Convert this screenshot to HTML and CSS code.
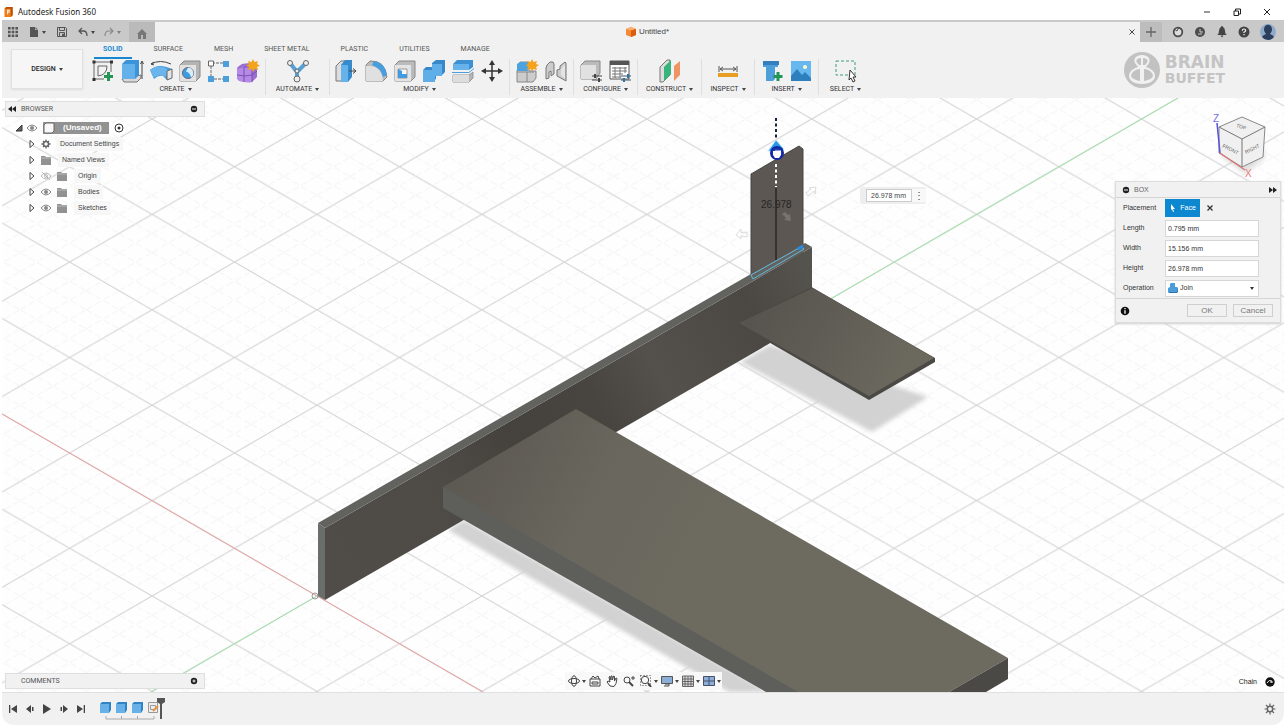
FILE: index.html
```html
<!DOCTYPE html>
<html lang="en">
<head>
<meta charset="utf-8">
<title>Autodesk Fusion 360</title>
<link rel="stylesheet" href="styles.css">
</head>
<body>
<div class="app">
<header class="titlebar">
  <svg class="i10" viewBox="0 0 10 11"><path d="M2 0h7v9l-2 2H0V2z" fill="#ef7d16"/><path d="M2 0h7v9l-2 2V2H0z" fill="#b94c08"/><path d="M3 3h3v1H4v1h2v1H4v2H3z" fill="#fff"/></svg>
  <h1>Autodesk Fusion 360</h1>
  <div class="window-buttons">
    <button aria-label="Minimize"><svg class="i10" viewBox="0 0 10 10"><path d="M2 5h6" stroke="#333"/></svg></button>
    <button aria-label="Restore"><svg class="i10" viewBox="0 0 10 10" fill="none" stroke="#222"><path d="M2 4h4.500v4.500H2zM3.500 4V2h5v5h-2"/></svg></button>
    <button aria-label="Close window"><svg class="i10" viewBox="0 0 10 10"><path d="M2 2l6 6M8 2l-6 6" stroke="#222"/></svg></button>
  </div>
</header>

<div class="docbar">
  <div class="quick">
    <button aria-label="Data panel"><svg class="i10" viewBox="0 0 10 10" fill="#555"><path d="M0 0h2.600v2.600H0zM3.700 0h2.600v2.600H3.700zM7.400 0H10v2.600H7.400zM0 3.700h2.600v2.600H0zM3.700 3.700h2.600v2.600H3.700zM7.400 3.700H10v2.600H7.400zM0 7.400h2.600V10H0zM3.700 7.400h2.600V10H3.700zM7.400 7.400H10V10H7.400z"/></svg></button>
    <button class="drop" aria-label="File"><svg class="i10" viewBox="0 0 10 10"><path d="M1 0h5v3h3v7H1z" fill="#555"/><path d="M6.500 0L9 2.500H6.500z" fill="#666"/></svg></button>
    <button aria-label="Save"><svg class="i10" viewBox="0 0 10 10"><path d="M.5.500h8l1 1v8h-9zM2.500.500v3h5v-3M2.500 9.500v-4h5v4M5.500 7h1v2h-1z" fill="none" stroke="#555"/></svg></button>
    <button class="drop" aria-label="Undo"><svg class="i10" viewBox="0 0 10 10" fill="none" stroke="#555" stroke-width="1.300"><path d="M4 1L1 4l3 3M1 4h4.500Q9 4 9 9"/></svg></button>
    <button class="drop faded" aria-label="Redo"><svg class="i10" viewBox="0 0 10 10" fill="none" stroke="#555" stroke-width="1.200"><path d="M6 1l3 3-3 3M9 4H4.500Q1 4 1 9"/></svg></button>
    <button class="home" aria-label="Home"><svg class="i10" viewBox="0 0 10 10"><path d="M5 0l5 5H9v5H6V6H4v4H1V5H0z" fill="#777"/></svg></button>
  </div>
  <div class="doc-tab">
    <svg class="i10" viewBox="0 0 10 10"><path d="M0 2l5-2 5 2v6l-5 2-5-2z" fill="#f58a35"/><path d="M0 2l5 1.500L10 2 5 0z" fill="#ffb070"/><path d="M5 3.500L10 2v6l-5 2z" fill="#dd5b10"/></svg>
    <span>Untitled*</span>
    <button class="tab-close" aria-label="Close Untitled"><svg class="i8" viewBox="0 0 8 8"><path d="M1.500 1.500l5 5M6.500 1.500l-5 5" stroke="#444"/></svg></button>
  </div>
  <div class="account">
    <button class="plus" aria-label="New tab"><svg class="i10" viewBox="0 0 10 10"><path d="M5 0v10M0 5h10" stroke="#666" stroke-width="1.300"/></svg></button>
    <button aria-label="Extensions"><svg class="i12" viewBox="0 0 12 12"><circle cx="6" cy="6" r="4.300" fill="#ddd" stroke="#4c4c4c" stroke-width="1.800"/><path d="M2 3l3 2 2-4 2 3" fill="none" stroke="#4c4c4c"/></svg></button>
    <button aria-label="Job status"><svg class="i12" viewBox="0 0 12 12"><circle cx="6" cy="6" r="5" fill="#4c4c4c"/><path d="M6 3v3h3M4 8h4" stroke="#ccc" fill="none"/></svg></button>
    <button aria-label="Notifications"><svg class="i12" viewBox="0 0 12 12" fill="#444"><path d="M6 0q1 0 1 1 2 1 2 4 0 3 2 4H1q2-1 2-4 0-3 2-4 0-1 1-1zM4.500 9.500h3L6 11.500z"/></svg></button>
    <button aria-label="Help"><svg class="i12" viewBox="0 0 12 12"><circle cx="6" cy="6" r="5.500" fill="#444"/><path d="M4.300 4.800Q4.300 3 6 3t1.700 1.600Q7.700 5.500 6 6.200V7M6 8v1.300" fill="none" stroke="#eee" stroke-width="1.200"/></svg></button>
    <button aria-label="Account"><svg class="i16" viewBox="0 0 16 16"><circle cx="8" cy="8" r="8" fill="#8fabc9"/><ellipse cx="8" cy="5.500" rx="4" ry="4.800" fill="#2b3f5c"/><path d="M6 8h4v2q3 1 4 3-2.500 3-6 3t-6-3q1-2 4-3z" fill="#2b3f5c"/></svg></button>
  </div>
</div>

<div class="ribbon">
  <button class="workspace drop">DESIGN</button>
  <div class="ribbon-main">
    <nav class="tabs">
      <a class="on" href="#solid">SOLID</a><a href="#surface">SURFACE</a><a href="#mesh">MESH</a><a href="#sheet">SHEET METAL</a><a href="#plastic">PLASTIC</a><a href="#utilities">UTILITIES</a><a href="#manage">MANAGE</a>
    </nav>
    <div class="groups">
      <section class="group">
        <div class="icons">
          <button aria-label="Create sketch"><svg viewBox="0 0 24 24"><path d="M3 3h17M3 3v17h10M20 3v10" fill="none" stroke="#666"/><path d="M1.500 1.500h3v3h-3zM19 1.500h3v3h-3zM1.500 19h3v3h-3z" fill="#333"/><path d="M7 17V7h9q0 9-9 10z" fill="none" stroke="#666"/><path d="M17.500 13v9M13 17.500h9" stroke="#239655" stroke-width="3"/></svg></button>
          <button aria-label="Extrude"><svg viewBox="0 0 24 24"><path d="M2 20l2 3h13l4-4v-3z" fill="#d8d8d8" stroke="#777"/><path d="M2 5l4-4h13v15l-4 4H2z" fill="#3b94d9"/><path d="M2 5h13v15H2z" fill="#63b0ea"/><path d="M22 20V3M20.500 5L22 2l1.500 3" fill="none" stroke="#444"/></svg></button>
          <button aria-label="Revolve"><svg viewBox="0 0 24 24"><path d="M1 11q5-4 10-4t12 3v9l-5 2-4-4q-5-1-9 3z" fill="#3f99dc"/><path d="M1 11q6-5 11-3 6 0 7 4l-2 6q-8-4-12 1z" fill="#6bb5ec"/><path d="M18 12l5-2v9l-5 2z" fill="#e5e5e5" stroke="#666"/><path d="M2 5q9-5 20 0M2 5l3-2M2 5l3 1" fill="none" stroke="#444"/></svg></button>
          <button aria-label="Hole"><svg viewBox="0 0 24 24"><path d="M2 6l4-4h16v16l-4 4H2z" fill="#b4b4b4" stroke="#888"/><path d="M2 6h16v16H2z" fill="#e2e2e2"/><circle cx="10" cy="14" r="5.500" fill="#3d9be0" stroke="#667"/><path d="M10 8.500a5.500 5.500 0 0 1 3 10q-1-5-5-6z" fill="#d9ecfa"/></svg></button>
          <button aria-label="Pattern"><svg viewBox="0 0 24 24"><path d="M5 4h12M4 7v12M7 20h10" stroke="#666" stroke-dasharray="3 1"/><path d="M1.500 2h5v5h-5z" fill="#fff" stroke="#666"/><path d="M16 2h6v6h-6zM1 17h6v6H1zM16 17h6v6h-6z" fill="#4b9fdc"/></svg></button>
          <button aria-label="Create form"><svg viewBox="0 0 24 24"><path d="M1 10q0-2 2-3l3-2q8-2 15 1v12l-5 5q-6 1-12-1-3-1-3-4z" fill="#9a6ed3"/><path d="M1 10q7-3 15 0v13q-6 1-12-1-3-1-3-4z" fill="#b48ae6"/><path d="M8 9v14M1 16q8 2 15 0l5-4M16 10v13M8 9l5-4M16 10l5-4" fill="none" stroke="#7950b4"/><path d="M17 0l1.500 3L22 2l-1 3 3 1.500-3 1.500 1 3-3.500-1L17 13l-1.500-3-3.500 1 1-3-3-1.500L13 5l-1-3 3.500 1z" fill="#f3a31d"/></svg></button>
        </div>
        <button class="label drop">CREATE</button>
      </section>
      <section class="group">
        <div class="icons"><button aria-label="Automate"><svg viewBox="0 0 24 24"><path d="M4 4l7 9 9-9M11 13v6" fill="none" stroke="#579fd5" stroke-width="4"/><g fill="#eee" stroke="#666"><circle cx="4" cy="4" r="2.500"/><circle cx="20" cy="4" r="2.500"/><circle cx="11" cy="20" r="3"/><circle cx="11" cy="12" r="2"/></g></svg></button></div>
        <button class="label drop">AUTOMATE</button>
      </section>
      <section class="group">
        <div class="icons">
          <button aria-label="Press pull"><svg viewBox="0 0 24 24"><path d="M1 7l5-5h4v20H1z" fill="#ddd" stroke="#777"/><path d="M6 6l4-5h7v17l-4 5H6z" fill="#358bce"/><path d="M6 6h7v17H6z" fill="#66b2eb"/><path d="M14 12h7M18 9.500l3 2.500-3 2.500" fill="none" stroke="#444"/></svg></button>
          <button aria-label="Fillet"><svg viewBox="0 0 24 24"><path d="M2 6l4-4q15-1 17 16l-4 4H2z" fill="#bbb" stroke="#888"/><path d="M2 7h4q12 1 13 15H2z" fill="#e0e0e0"/><path d="M10 2q11 2 13 14l-4 2Q17 9 8 6z" fill="#469edf"/></svg></button>
          <button aria-label="Shell"><svg viewBox="0 0 24 24"><path d="M2 6l4-4h16v16l-4 4H2z" fill="#bbb" stroke="#888"/><path d="M2 6h16v16H2z" fill="#e4e4e4"/><path d="M5 10h9v9H5z" fill="#f7f7f7" stroke="#999"/><path d="M5 10l4 2v3h5v4H5z" fill="#429be0"/></svg></button>
          <button aria-label="Combine"><svg viewBox="0 0 24 24"><path d="M1 11l3-3h6V4l4-3h9v12l-4 4h-5v3l-4 3H1z" fill="#3788cb"/><path d="M1 11h9V5h10v12h-7v6H1z" fill="#5faee8"/></svg></button>
          <button aria-label="Split"><svg viewBox="0 0 24 24"><path d="M2 5l4-4h16v7l-4 3H2z" fill="#3d91d3"/><path d="M2 5h16v6H2z" fill="#68b2eb"/><path d="M2 16h16l4-3v6l-4 4H2z" fill="#b5b5b5" stroke="#999"/><path d="M2 16h16v7H2z" fill="#ddd"/><path d="M1 13.500h17l5-4" fill="none" stroke="#4a9fde"/></svg></button>
          <button aria-label="Move"><svg viewBox="0 0 24 24"><path d="M12 4v16M4 12h16" stroke="#333" stroke-width="1.500"/><path d="M12 1l3 5H9zM12 23l-3-5h6zM1 12l5-3v6zM23 12l-5 3V9z" fill="#333"/></svg></button>
        </div>
        <button class="label drop">MODIFY</button>
      </section>
      <section class="group">
        <div class="icons">
          <button aria-label="New component"><svg viewBox="0 0 24 24"><path d="M2 12l3-9h9v9h7v7l-3 4H2z" fill="#ccc" stroke="#888"/><path d="M2 5l3-2h8v9H2z" fill="#4da3e0"/><path d="M2 13h10v10M12 13h7" fill="none" stroke="#888"/><path d="M17 0l1.500 3L22 2l-1 3 3 1-3 2 1 3-3.500-1L17 12l-1.500-2-3.500 1 1-3-2-2 2-1-1-3 3.500 1z" fill="#f3a31d"/></svg></button>
          <button aria-label="Joint"><svg viewBox="0 0 24 24" fill="#ccc" stroke="#777"><path d="M2 20V9q0-3 4-6 4-1 4 2v10l-3 2v-5l-2 1v6zM22 22l-7-4-2-1v-6l3-1V7l5-4 1 1z"/><path d="M17 10v6l4 4V5z" fill="#e4e4e4" stroke="none"/></svg></button>
        </div>
        <button class="label drop">ASSEMBLE</button>
      </section>
      <section class="group">
        <div class="icons">
          <button aria-label="Configure model"><svg viewBox="0 0 24 24"><path d="M2 6l4-4h15v12l-4 6H2z" fill="#bbb" stroke="#888"/><path d="M2 6h15v14H2z" fill="#e1e1e1"/><path d="M13 17h10M13 21h10" stroke="#444"/><path d="M16 15v4M20 19v4" stroke="#444" stroke-width="2"/></svg></button>
          <button aria-label="Configuration table"><svg viewBox="0 0 24 24"><path d="M2 2h19v18H2z" fill="#fff" stroke="#555"/><path d="M2 2h19v4H2z" fill="#555"/><path d="M4 9h15M4 12h15M4 15h11M4 18h9M7 8v11M12 8v11M17 8v6" stroke="#777"/><path d="M13 17h10M13 21h10" stroke="#456"/><path d="M20 15v4M16 19v4" stroke="#2d75a6" stroke-width="2"/></svg></button>
        </div>
        <button class="label drop">CONFIGURE</button>
      </section>
      <section class="group">
        <div class="icons"><button aria-label="Offset plane"><svg viewBox="0 0 24 24"><path d="M2 8l7-7h3v15l-7 7H2z" fill="#ddd" stroke="#777"/><path d="M6 8l7-7v14l-7 7z" fill="#36b47c"/><path d="M16 7l6-5v14l-6 6z" fill="#ef9565"/></svg></button></div>
        <button class="label drop">CONSTRUCT</button>
      </section>
      <section class="group narrow">
        <div class="icons"><button aria-label="Measure"><svg viewBox="0 0 24 24"><path d="M3 7v6M21 7v6M4 10h16M7 8l-3 2 3 2M17 8l3 2-3 2" fill="none" stroke="#555"/><path d="M2 14h20v4H2z" fill="#e89d25"/></svg></button></div>
        <button class="label drop">INSPECT</button>
      </section>
      <section class="group">
        <div class="icons">
          <button aria-label="Insert component"><svg viewBox="0 0 24 24"><path d="M3 2h15v6h-3v12l-2 2H6V8H3z" fill="#4f9edc"/><path d="M3 2h16v4H3z" fill="#347fbc"/><path d="M18 13v9M13.500 17.500h9" stroke="#239655" stroke-width="3"/></svg></button>
          <button aria-label="Insert image"><svg viewBox="0 0 24 24"><path d="M2 2h20v20H2z" fill="#67b8ef"/><path d="M2 17l6-7 5 6 3-3 6 6v3H2z" fill="#2d7fbe"/><circle cx="16" cy="8" r="2" fill="#fff8cd"/></svg></button>
        </div>
        <button class="label drop">INSERT</button>
      </section>
      <section class="group narrow last">
        <div class="icons"><button aria-label="Select"><svg viewBox="0 0 24 24"><path d="M2 2h19v14H2z" fill="none" stroke="#3e9c78" stroke-dasharray="3 2"/><path d="M16 11l6 7h-3l2 4-2 1-2-4-2 2z" fill="#fff" stroke="#333"/></svg></button></div>
        <button class="label drop">SELECT</button>
      </section>
    </div>
  </div>
  <div class="brand">
    <svg viewBox="0 0 36 36"><circle cx="18" cy="18" r="18" fill="#c2c2c2"/><path d="M18 3c-6 0-9 4-7 8l3 4c-6 2-9 5-9 9 0 5 6 8 13 8s13-3 13-8c0-4-3-7-9-9l3-4c2-4-1-8-7-8z" fill="#f1f1f1"/><g fill="#c2c2c2"><path d="M17 6v7h-2Q9 7 17 6zM19 6v7h2Q27 7 19 6zM16 17v12Q2 26 10 19q3-2 6-2zM20 17v12q14-3 6-10-3-2-6-2z"/></g></svg>
    <div class="brand-name"><span class="brain">BRAIN</span><span class="buffet">BUFFET</span></div>
  </div>
</div>

<main class="canvas">
  <svg class="scene" viewBox="2 98 1282 594" preserveAspectRatio="xMinYMin slice">
    <defs>
      <pattern id="mid" x="317" y="596" width="32.980" height="19.080" patternUnits="userSpaceOnUse"><path d="M0 0l32.980 19.080M0 19.080L32.980 0" stroke="#efeff0" stroke-width=".8" stroke-dasharray="7 3"/></pattern>
      <pattern id="major" x="317" y="596" width="164.900" height="95.400" patternUnits="userSpaceOnUse"><path d="M0 0l164.900 95.400M0 95.400L164.900 0" stroke="#d0d0d1"/></pattern>
      <linearGradient id="spar" x1="325" y1="560" x2="812" y2="280" gradientUnits="userSpaceOnUse"><stop offset="0" stop-color="#504d49"/><stop offset=".25" stop-color="#4e4b46"/><stop offset=".4" stop-color="#45413c"/><stop offset=".56" stop-color="#48443f"/><stop offset=".68" stop-color="#54504b"/><stop offset=".88" stop-color="#4b4844"/><stop offset="1" stop-color="#55534e"/></linearGradient>
      <linearGradient id="wing" x1="444" y1="487" x2="680" y2="610" gradientUnits="userSpaceOnUse"><stop offset="0" stop-color="#5c5852"/><stop offset=".5" stop-color="#69665d"/><stop offset="1" stop-color="#6d6a60"/></linearGradient>
      <linearGradient id="tail" x1="760" y1="300" x2="900" y2="375" gradientUnits="userSpaceOnUse"><stop offset="0" stop-color="#57534e"/><stop offset="1" stop-color="#6b685e"/></linearGradient>
      <filter id="soft"><feGaussianBlur stdDeviation="2"/></filter>
    </defs>
    <path d="M2 98h1282v594H2z" fill="#fefefe"/>
    <path d="M2 98h1282v594H2z" fill="url(#mid)"/>
    <path d="M2 98h1282v594H2z" fill="url(#major)"/>
    <path d="M2 414l315 182 166 96" stroke="#e8a0a0" fill="none"/>
    <path d="M151 692L1178 98" stroke="#9fe3a6"/>
    <path d="M464 520l-16 10 281 162h40zM770 345l-30 17 132 70 56-35z" fill="#d2d2d2" filter="url(#soft)"/>
    <path d="M751 174l48-28 4 3v105l-52 24z" fill="#5c5753"/>
    <path d="M751 174l48-28 4 3v98M751 174v103" fill="none" stroke="#474743"/>
    <path d="M325 528l487-281v72L325 600z" fill="url(#spar)"/>
    <path d="M318 523l487-280 7 4-487 281z" fill="#62625f"/>
    <path d="M318 523l7 5v72l-7-4z" fill="#6b6d6a"/>
    <path d="M812 287l1 1 122 70v4l-66 38-130-75v-3z" fill="#4a4945"/>
    <path d="M813 288l121 70-65 38-130-73z" fill="url(#tail)"/>
    <path d="M443 487l20-5 345 210h-42L443 508z" fill="#5e5f5b"/>
    <path d="M443 487l133-78 432 249-59 34H798z" fill="url(#wing)"/>
    <path d="M1008 658v21l-22 13h-37z" fill="#4b4946"/>
    <path d="M751 275l50-28 3 2-51 30z" fill="none" stroke="#63b8dd"/>
    <path d="M798 249l5-3" stroke="#238ce8" stroke-width="3"/>
    <text x="761" y="208" class="dimension">26.978</text>
    <path d="M776 118v24" stroke="#162039" stroke-width="2" stroke-dasharray="3 2.500"/>
    <path d="M776 164v24" stroke="#fff" stroke-width="2" stroke-dasharray="3 2.500"/>
    <path d="M776 187v73" stroke="#292520" stroke-width="1.500"/>
    <path d="M768 151l8-11 8 9-4 3z" fill="#2798e6" stroke="#cbefff"/>
    <circle cx="777" cy="153" r="6" fill="#183cae" stroke="#1427a1" stroke-width="2"/>
    <path d="M773 151v4l2 3h4l2-3v-4l-1-1-1 1-1-1-1 1-1-1-1 1z" fill="#fff"/>
    <g fill="none" stroke="#dcdcdc"><path d="M806 193l5-4-2-1 7-1-1 7-1-3-6 5zM736 235l5-6v4l6-1v5l-6-1v3z"/></g>
    <path d="M782 214l3-2 3 3 2-1 1 7-7-1 2-2z" fill="#77736e"/>
    <circle cx="315" cy="596" r="3" fill="none" stroke="#999"/>
    <g class="viewcube">
      <path d="M1219 155l26 19 20-16-1-10z" fill="#999" opacity=".3" filter="url(#soft)"/>
      <path d="M1219 127l23-10 23 10-2 30-21 10-23-14z" fill="#f0f0f0" stroke="#888"/>
      <path d="M1219 127l23 12 23-12M1242 139v28" fill="none" stroke="#777"/>
      <path d="M1217 123l3 30" stroke="#5552db" stroke-width="1.500"/><path d="M1220 153l25 17" stroke="#dc777a" stroke-width="1.500"/>
      <text x="1213" y="122" fill="#7770e5" class="axis">Z</text><text x="1245" y="177" fill="#ed7777" class="axis">X</text>
      <text transform="translate(1222 147) rotate(26)">FRONT</text><text transform="translate(1246 154) rotate(-27)">RIGHT</text><text transform="translate(1236 127) rotate(16)">TOP</text>
    </g>
  </svg>

  <aside class="browser">
    <div class="panel-head"><svg class="i8" viewBox="0 0 8 8"><path d="M4 1v6L0 4zM8 1v6L4 4z" fill="#222"/></svg><span>BROWSER</span><button aria-label="Browser options"><svg class="i8" viewBox="0 0 8 8"><circle cx="4" cy="4" r="3.200" fill="#222"/><path d="M2 4h4" stroke="#eee"/></svg></button></div>
    <ul class="tree">
      <li class="root"><svg class="i8" viewBox="0 0 8 8"><path d="M1 7l6-6v6z" fill="#666" stroke="#333"/></svg><svg class="i12" viewBox="0 0 12 12"><path d="M1 6q5-6 10 0-5 6-10 0z" fill="none" stroke="#888"/><circle cx="6" cy="6" r="2" fill="#888"/></svg><span class="root-name"><svg class="i12" viewBox="0 0 12 12"><path d="M1 3l2-2h8v8l-2 2H1z" fill="#f8f8f8" stroke="#666"/></svg><b>(Unsaved)</b></span><svg class="i10" viewBox="0 0 10 10"><circle cx="5" cy="5" r="4" fill="#fff" stroke="#333"/><circle cx="5" cy="5" r="1.500" fill="#333"/></svg></li>
      <li><svg class="i8 twist" viewBox="0 0 8 8"><path d="M2 .5l4 3.500-4 3.500z" fill="#fff" stroke="#444"/></svg><svg class="i12" viewBox="0 0 12 12"><circle cx="6" cy="6" r="2.500" fill="none" stroke="#666" stroke-width="1.500"/><path d="M6 1.500v2M6 8.500v2M1.500 6h2M8.500 6h2M3 3l1 1M8 8l1 1M9 3L8 4M4 8L3 9" stroke="#666" stroke-width="1.300"/></svg><span>Document Settings</span></li>
      <li class="folder"><svg class="i8 twist" viewBox="0 0 8 8"><path d="M2 .5l4 3.500-4 3.500z" fill="#fff" stroke="#444"/></svg><svg class="i12" viewBox="0 0 12 12"><path d="M1 2h4l1 1h5v8H1z" fill="#929292"/><path d="M1 4h10" stroke="#bbb"/></svg><span>Named Views</span></li>
      <li class="folder"><svg class="i8 twist" viewBox="0 0 8 8"><path d="M2 .5l4 3.500-4 3.500z" fill="#fff" stroke="#444"/></svg><svg class="i12" viewBox="0 0 12 12"><path d="M1 6q5-6 10 0-5 6-10 0zM2 2l8 8" fill="none" stroke="#bbb"/><circle cx="6" cy="6" r="1.500" fill="none" stroke="#bbb"/></svg><svg class="i12" viewBox="0 0 12 12"><path d="M1 2h4l1 1h5v8H1z" fill="#929292"/><path d="M1 4h10" stroke="#bbb"/></svg><span>Origin</span></li>
      <li class="folder"><svg class="i8 twist" viewBox="0 0 8 8"><path d="M2 .5l4 3.500-4 3.500z" fill="#fff" stroke="#444"/></svg><svg class="i12" viewBox="0 0 12 12"><path d="M1 6q5-6 10 0-5 6-10 0z" fill="none" stroke="#888"/><circle cx="6" cy="6" r="2" fill="#888"/></svg><svg class="i12" viewBox="0 0 12 12"><path d="M1 2h4l1 1h5v8H1z" fill="#929292"/><path d="M1 4h10" stroke="#bbb"/></svg><span>Bodies</span></li>
      <li class="folder"><svg class="i8 twist" viewBox="0 0 8 8"><path d="M2 .5l4 3.500-4 3.500z" fill="#fff" stroke="#444"/></svg><svg class="i12" viewBox="0 0 12 12"><path d="M1 6q5-6 10 0-5 6-10 0z" fill="none" stroke="#888"/><circle cx="6" cy="6" r="2" fill="#888"/></svg><svg class="i12" viewBox="0 0 12 12"><path d="M1 2h4l1 1h5v8H1z" fill="#929292"/><path d="M1 4h10" stroke="#bbb"/></svg><span>Sketches</span></li>
    </ul>
  </aside>

  <div class="value-box"><input aria-label="Height value" value="26.978 mm"><button aria-label="More">⋮</button></div>

  <form class="dialog">
    <div class="dialog-head"><svg class="i8" viewBox="0 0 8 8"><circle cx="4" cy="4" r="3.200" fill="#222"/><path d="M2 4h4" stroke="#eee"/></svg><span>BOX</span><svg class="i8" viewBox="0 0 8 8"><path d="M0 1v6l4-3zM4 1v6l4-3z" fill="#222"/></svg></div>
    <div class="fields">
      <span>Placement</span><div class="placement"><button type="button" class="face"><svg class="i8" viewBox="0 0 8 8"><path d="M2 0l4 5H4l1 2.500-1 .5-1-3-1 1z" fill="#fff"/></svg>Face</button><button type="button" aria-label="Clear"><svg class="i8" viewBox="0 0 8 8"><path d="M1.500 1.500l5 5M6.500 1.500l-5 5" stroke="#333" stroke-width="1.300"/></svg></button></div>
      <label for="len">Length</label><input id="len" value="0.795 mm">
      <label for="wid">Width</label><input id="wid" value="15.156 mm">
      <label for="hei">Height</label><input id="hei" value="26.978 mm">
      <label for="op">Operation</label><div class="select"><svg class="i10" viewBox="0 0 10 10"><path d="M0 5l2-1V1l1-1h4v4h2l1 1v4H0z" fill="#4a9cdb"/><path d="M0 9l1 1h8l1-1V5L9 9z" fill="#2d72aa"/></svg><select id="op"><option>Join</option></select></div>
    </div>
    <div class="dialog-foot"><svg class="i10" viewBox="0 0 10 10"><circle cx="5" cy="5" r="4.300" fill="#111"/><path d="M5 2v1.300M5 4.200v3.500" stroke="#fff" stroke-width="1.300"/></svg><button type="button" disabled>OK</button><button type="button">Cancel</button></div>
  </form>

  <div class="comments panel-head"><span>COMMENTS</span><button aria-label="Add comment"><svg class="i8" viewBox="0 0 8 8"><circle cx="4" cy="4" r="3.200" fill="#222"/><path d="M2.500 4h3M4 2.500v3" stroke="#eee"/></svg></button></div>

  <div class="navbar">
    <button class="drop" aria-label="Orbit"><svg class="i12" viewBox="0 0 12 12" fill="none" stroke="#444"><ellipse cx="6" cy="6" rx="5.500" ry="2.500"/><ellipse cx="6" cy="6" rx="2.500" ry="5.300"/></svg></button>
    <button aria-label="Look at"><svg class="i12" viewBox="0 0 12 12" fill="none" stroke="#444"><path d="M1 4h10v7H1zM3 7h6v2H3zM2 4l2-3 2 2 3-2 1 3"/></svg></button>
    <button aria-label="Pan"><svg class="i12" viewBox="0 0 12 12" fill="#fff" stroke="#444"><path d="M4 11L1 7l1-1 2 1-1-5 1-.5L5 5V1h1l.5 4L7.500 1l1 .5V6L10 3l1 .5-1 5-2 3z"/></svg></button>
    <button aria-label="Zoom"><svg class="i12" viewBox="0 0 12 12" fill="none" stroke="#444"><circle cx="4" cy="5" r="3"/><path d="M6 7l4 4" stroke-width="2"/><path d="M8 3h4M10 1v4"/></svg></button>
    <button class="drop" aria-label="Fit"><svg class="i12" viewBox="0 0 12 12" fill="none" stroke="#444"><path d="M.5.500h10v10H.500z" stroke-dasharray="1 2"/><circle cx="5" cy="5" r="3.700"/><path d="M8 8l3 4" stroke-width="2"/></svg></button>
    <button class="drop" aria-label="Display settings"><svg class="i12" viewBox="0 0 12 12"><path d="M.5 1.500h11v7H.500z" fill="#8baed8" stroke="#555"/><path d="M4 9h4v2H3" stroke="#555" fill="#ddd"/></svg></button>
    <button class="drop" aria-label="Grid settings"><svg class="i12" viewBox="0 0 12 12"><path d="M.5 1v10.500h11V1zM3 1v10M6 1v10M9 1v10M1 4h10M1 6.500h10M1 9h10" fill="#ddd" stroke="#666"/></svg></button>
    <button class="drop" aria-label="Viewports"><svg class="i12" viewBox="0 0 12 12"><path d="M.5 1.500h11v9H.500zM6 1v10M0 6h12" fill="#8baed8" stroke="#44516a"/></svg></button>
  </div>
  <div class="chain"><span>Chain</span><svg class="i10" viewBox="0 0 10 10"><circle cx="5" cy="5" r="4.700" fill="#111"/><path d="M2 6q2-4 5-2v2M5 5h2" fill="none" stroke="#eee"/></svg></div>
</main>

<footer class="timeline">
  <button aria-label="Go to start"><svg class="i10" viewBox="0 0 10 10" fill="#444"><path d="M1 1h1.300v8H1zM9 1v8L3 5z"/></svg></button>
  <button aria-label="Step back"><svg class="i10" viewBox="0 0 10 10" fill="#444"><path d="M6 1v8L1 5zM7 3h1.500v4H7z"/></svg></button>
  <button aria-label="Play"><svg class="i10" viewBox="0 0 10 10" fill="#444"><path d="M1 0l8 5-8 5z"/></svg></button>
  <button aria-label="Step forward"><svg class="i10" viewBox="0 0 10 10" fill="#444"><path d="M4 1v8l5-4zM1.500 3H3v4H1.500z"/></svg></button>
  <button aria-label="Go to end"><svg class="i10" viewBox="0 0 10 10" fill="#444"><path d="M7.700 1H9v8H7.700zM1 1v8l6-4z"/></svg></button>
  <svg class="history" viewBox="0 0 66 24"><path d="M1 7l2-2h9v8l-2 3H1z" fill="#2f83c6"/><path d="M1 7h9v9H1z" fill="#67b0e8"/><path d="M17 7l2-2h9v8l-2 3h-9z" fill="#2f83c6"/><path d="M17 7h9v9h-9z" fill="#67b0e8"/><path d="M33 7l2-2h9v8l-2 3h-9z" fill="#2f83c6"/><path d="M33 7h9v9h-9z" fill="#67b0e8"/><path d="M49.500 5.500h9v10h-9zM51.500 8.500h5v4h-5z" fill="#eee" stroke="#999"/><path d="M54 14l5-5" stroke="#e69345" stroke-width="2"/><path d="M7 19v3h48v-3M22.500 19v3M38.500 19v3" fill="none" stroke="#aaa"/><path d="M58 1h8v4l-3 2v15h-2V7l-3-2z" fill="#555"/></svg>
  <button class="settings" aria-label="Settings"><svg class="i12" viewBox="0 0 12 12"><circle cx="6" cy="6" r="2.700" fill="none" stroke="#666" stroke-width="1.500"/><path d="M6 .5v2.500M6 9v2.500M.5 6H3M9 6h2.500M2 2l2 2M8 8l2 2M10 2L8 4M4 8l-2 2" stroke="#666" stroke-width="1.200"/></svg></button>
</footer>
</div>
</body>
</html>
```
FILE: styles.css
```css
* { box-sizing: border-box; }
body { margin: 0; background: #fff; color: #444; font: 7px/10px "Liberation Sans", Arial, sans-serif; }
button { display: inline-flex; align-items: center; justify-content: center; border: 0; padding: 0; background: none; color: inherit; font: inherit; }
input, select { font: inherit; color: inherit; }
svg { display: block; flex: none; }
.i8 { width: 8px; height: 8px; }
.i10 { width: 10px; height: 10px; }
.i12 { width: 12px; height: 12px; }
.i16 { width: 16px; height: 16px; }
.drop { gap: 3px; }
.drop::after { content: ""; border: 2px solid transparent; border-top: 3px solid #444; border-bottom: 0; }
.app { display: flex; flex-direction: column; height: 100vh; padding: 0 3px 1px 2px; overflow: hidden; }

.titlebar { display: flex; align-items: center; gap: 4px; height: 22px; padding: 4px 12px 0 2px; border-bottom: 2px solid #c9c9c9; flex: none; }
.titlebar h1 { margin: 0; font: 8px/12px "Noto Sans", sans-serif; color: #222; }
.window-buttons { display: flex; gap: 20px; margin-left: auto; }

.docbar { display: flex; height: 20px; background: #f1f1f1; flex: none; }
.quick { display: flex; align-items: center; gap: 11px; padding-left: 6px; background: #c9c9c9; }
.quick .faded { opacity: .55; margin: 0 -3px 0 -2px; }
.quick .home { width: 26px; height: 20px; padding-top: 4px; background: #bababa; }
.doc-tab { display: flex; flex: 1; align-items: center; justify-content: center; gap: 3px; position: relative; font-size: 8px; }
.tab-close { position: absolute; right: 4px; }
.account { display: flex; align-items: center; gap: 10px; padding-right: 8px; background: #c9c9c9; }
.plus { width: 22px; height: 20px; background: #bdbdbd; }

.ribbon { display: flex; height: 56px; background: #f1f1f1; flex: none; font-family: Roboto, sans-serif; }
.workspace { width: 72px; height: 40px; margin: 7px 3px 0 9px; border: 1px solid #e1e1e1; background: #f6f6f6; box-shadow: 0 1px 2px #ddd; font-weight: 500; color: #222; }
.ribbon-main { flex: 1; }
.tabs { display: flex; gap: 13px; padding-left: 8px; }
.tabs a { padding: 2px 9px 3px; border-bottom: 2px solid transparent; color: #555; text-decoration: none; }
.tabs .on { border-color: #1687d0; color: #1687d0; font-weight: 700; }
.groups { display: flex; }
.group { display: flex; flex-direction: column; align-items: center; min-width: 64px; padding: 0 5px; border-right: 1px solid #dfdfdf; }
.narrow { min-width: 53px; }
.last { border: 0; }
.icons { display: flex; gap: 5px; }
.icons svg { width: 24px; height: 24px; }
.label { height: 12px; color: #333; }
.brand { display: flex; align-items: center; gap: 5px; margin-right: 59px; color: #c4c4c4; }
.brand > svg { width: 36px; height: 36px; }
.brand-name { display: flex; flex-direction: column; font-family: "Noto Sans", sans-serif; font-weight: 700; }
.brand-name { font-family: "DejaVu Sans", sans-serif; }
.brain { font-size: 17px; line-height: 17px; }
.buffet { font-size: 14px; line-height: 15px; }

.canvas { position: relative; flex: 1; min-height: 0; overflow: hidden; }
.scene { width: 100%; height: 100%; }
.dimension { font-size: 10px; fill: #282522; }
.viewcube { font-size: 5px; fill: #666; }
.axis { font-size: 10px; }
.panel-head { display: flex; align-items: center; gap: 5px; width: 200px; height: 16px; padding: 0 6px 0 2px; border: 1px solid #dedede; background: #f1f1f1; font-family: Roboto, sans-serif; color: #555; }
.panel-head button { margin-left: auto; }
.browser { position: absolute; left: 3px; top: 3px; }
.tree { margin: 3px 0 0; padding: 0; list-style: none; }
.tree li { display: flex; align-items: center; gap: 4px; width: max-content; height: 16px; padding: 0 4px 0 23px; }
.tree li span:last-child { padding: 2px 4px; background: #f7f7f7; }
.tree .folder span { margin-left: 2px; }
.tree .root { gap: 3px; padding-left: 10px; }
.root-name { display: flex; align-items: center; gap: 8px; width: 66px; height: 12px; margin: 0 2px; background: #929292; color: #fff; font-size: 8px; }
.value-box { position: absolute; left: 858px; top: 89px; display: flex; align-items: center; padding: 2px 0 2px 6px; background: #eeeeee; border-radius: 2px; }
.value-box input { width: 46px; height: 13px; padding: 0 4px; border: 1px solid #ccc; background: #fff; }
.value-box button { width: 14px; height: 13px; font-size: 10px; background: #f8f8f8; }

.dialog { position: absolute; right: 3px; top: 83px; width: 166px; border: 1px solid #ddd; background: #f1f1f1; box-shadow: 0 1px 2px #ccc; }
.dialog-head { display: flex; align-items: center; gap: 4px; height: 16px; padding: 0 3px 0 6px; border-bottom: 1px solid #d5d5d5; color: #666; }
.dialog-head .i8:last-child { margin-left: auto; }
.fields { display: grid; grid-template-columns: 42px 94px; grid-auto-rows: 20px; align-items: center; padding: 0 7px; color: #333; }
.fields input, .select { width: 94px; height: 17px; padding: 0 2px; border: 1px solid #d6d6d6; background: #fff; }
.placement { display: flex; gap: 5px; }
.face { width: 35px; height: 18px; gap: 3px; background: #0c87d0; color: #fff; }
.placement button:last-child { width: 10px; }
.select { display: flex; align-items: center; position: relative; }
.select select { flex: 1; height: 15px; padding: 0 2px; border: 0; background: none; appearance: none; }
.select::after { content: ""; margin-right: 2px; border: 2px solid transparent; border-top: 3px solid #333; border-bottom: 0; }
.dialog-foot { display: flex; align-items: center; gap: 6px; height: 24px; padding: 0 7px 0 4px; border-top: 1px solid #d5d5d5; }
.dialog-foot button { width: 40px; height: 13px; border: 1px solid #cfcfcf; color: #777; font-size: 8px; }
.dialog-foot svg { margin-right: auto; }
.comments { position: absolute; left: 3px; bottom: 3px; padding-left: 15px; }
.navbar { position: absolute; left: 563px; bottom: 2px; display: flex; align-items: center; gap: 5px; height: 18px; padding: 0 3px; background: #f8f8f8; }
.navbar .drop { gap: 2px; margin-right: -2px; }
.chain { position: absolute; right: 36px; right: 36px; bottom: 5px; display: flex; align-items: center; gap: 8px; color: #222; }
.chain { right: 9px; }

.timeline { display: flex; align-items: center; gap: 7px; height: 33px; padding: 0 8px 0 6px; border-top: 1px solid #e0e0e0; border-radius: 0 0 12px 12px; background: #f1f1f1; flex: none; }
.history { width: 66px; height: 24px; margin-left: 6px; }
.settings { margin-left: auto; }
```
